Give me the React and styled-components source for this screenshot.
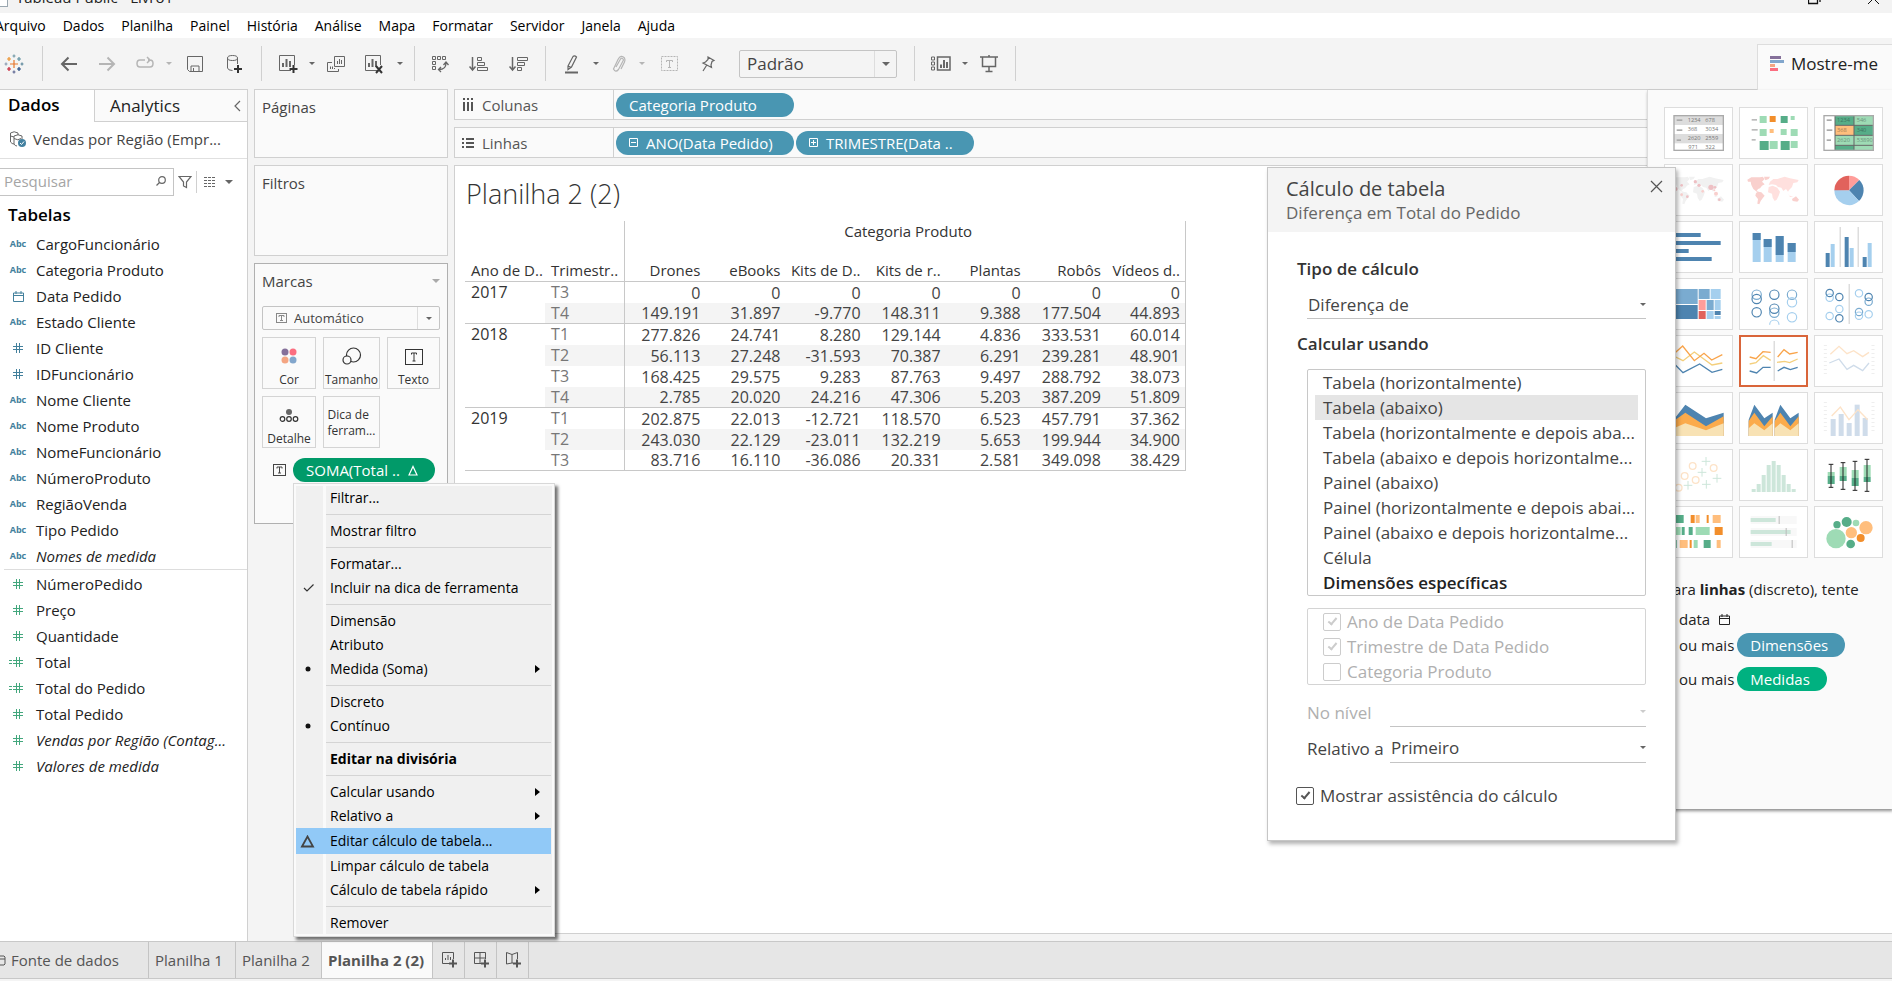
import React from "react";
import styled, { createGlobalStyle, css } from "styled-components";

const UI = `"Open Sans", "Noto Sans", sans-serif`;
const LINE = "#d0d0d0";
const DIM = "#4996b2";
const DK = "#56ad88";
const LT = "#9edbb5";
const OR = "#f28e2b";
const LO = "#ffbe7d";
const B1 = "#4e84b0";
const B2 = "#7aabd0";
const B3 = "#a5cfee";
const FADE_G = "#cde6da";
const FADE_O = "#fde3c8";
const FADE_B = "#cfdcea";

const Global = createGlobalStyle`
  *, *::before, *::after { box-sizing: border-box; }
  body { margin: 0; background: #f4f4f4; font-family: ${UI}; font-size: 15px; line-height: 20px; color: #222; }
  button, input, select { font: inherit; color: inherit; margin: 0; padding: 0; }
  button { background: none; border: 0; text-align: left; white-space: nowrap; }
  select { appearance: none; background: none; border: 0; border-radius: 0; outline: 0; opacity: 1; }
  h1, h2, h3, p, ul { margin: 0; padding: 0; font-weight: 400; }
  ul { list-style: none; }
  svg { display: block; flex: none; }
`;

const Window = styled.div`
  position: relative;
  display: flex;
  flex-direction: column;
  height: 100vh;
  overflow: hidden;
`;

const TitleBar = styled.header`
  display: flex;
  flex: none;
  height: 13px;
  overflow: hidden;
  background: #f3f3f3;
`;
const TitleText = styled.div`
  flex: 1;
  margin: -13px 0 0 8px;
  color: #222;
`;
const WindowButtons = styled.div`
  display: flex;
  gap: 46px;
  margin: -7px 12px 0 0;
`;
const AppMark = styled.div`
  width: 8px;
  height: 7px;
  border: 1px solid #9aa7b0;
  border-width: 0 1px 1px 0;
  background: #fff;
`;

const MenuBar = styled.nav`
  display: flex;
  flex: none;
  gap: 17px;
  height: 25px;
  margin-left: -5px;
  align-items: center;
  background: #fff;
  font-size: 14px;
  color: #000;
`;

const ToolBar = styled.div`
  display: flex;
  flex: none;
  align-items: center;
  height: 51px;
  color: #666;
`;
const Tool = styled.button`
  display: flex;
  flex: none;
  align-items: center;
  justify-content: center;
  width: ${(p) => p.$w || 36}px;
  height: 32px;
  color: ${(p) => (p.$off ? "#b5b5b5" : "#666")};
`;
const ToolSep = styled.span`
  flex: none;
  width: 1px;
  height: 35px;
  margin: 0 8px;
  background: ${LINE};
`;
const Caret = styled.span`
  flex: none;
  width: 0;
  height: 0;
  border: solid transparent;
  border-width: ${(p) => p.$s || 4}px ${(p) => p.$s || 4}px 0;
  border-top-color: ${(p) => p.$c || "#666"};
`;

const SelectBox = styled.label`
  display: flex;
  flex: none;
  align-items: center;
  width: ${(p) => (p.$w ? `${p.$w}px` : "auto")};
  height: ${(p) => p.$h}px;
  border: 1px solid #c4c4c4;
  border-radius: 2px;
  margin-left: ${(p) => p.$ml || 0}px;
  color: #444;
  font-size: ${(p) => p.$fs}px;
  select { flex: 1; min-width: 0; padding-left: 7px; height: 100%; }
`;
const SelectArrow = styled.span`
  display: flex;
  align-items: center;
  justify-content: center;
  width: 22px;
  height: 100%;
  border-left: 1px solid #ddd;
`;
const SelectGlyph = styled.span`
  margin-left: 13px;
  color: #888;
`;

const Body = styled.main`
  display: grid;
  flex: 1;
  min-height: 0;
  grid-template-columns: 248px 194px minmax(0, 1fr);
  column-gap: 6px;
`;

/* Data pane */
const DataPane = styled.aside`
  border-right: 1px solid ${LINE};
  border-top: 1px solid ${LINE};
  background: #fff;
`;
const PaneTabs = styled.div`
  display: flex;
  height: 32px;
  font-size: 17px;
`;
const PaneTab = styled.button`
  display: flex;
  align-items: center;
  justify-content: space-between;
  color: #000;
  ${(p) =>
    p.$active
      ? css`
          width: 94px;
          padding: 0 0 2px 8px;
          font-weight: 600;
        `
      : css`
          flex: 1;
          padding: 0 6px 0 15px;
          border-left: 1px solid ${LINE};
          border-bottom: 1px solid ${LINE};
          background: #fafafa;
          color: #222;
        `}
`;
const Source = styled.div`
  display: flex;
  align-items: center;
  gap: 6px;
  height: 37px;
  padding: 0 0 2px 9px;
  border-bottom: 1px solid #e0e0e0;
  color: #444;
`;
const SearchRow = styled.div`
  display: flex;
  align-items: center;
  height: 27px;
  margin: 9px 0 6px;
  color: #666;
`;
const SearchBox = styled.label`
  display: flex;
  align-items: center;
  width: 174px;
  height: 28px;
  padding: 0 7px 1px 0;
  border: 1px solid #c4c4c4;
  border-left: 0;
  input { flex: 1; min-width: 0; border: 0; padding-left: 4px; background: none; outline: 0; }
  input::placeholder { color: #a5a5a5; opacity: 1; }
`;
const SearchTool = styled.button`
  display: flex;
  align-items: center;
  justify-content: center;
  width: ${(p) => p.$w}px;
  height: 22px;
  border-left: ${(p) => (p.$line ? `1px solid ${LINE}` : "0")};
`;
const TablesHeading = styled.h2`
  height: 30px;
  padding: 4px 0 0 8px;
  font-size: 17px;
  font-weight: 600;
  color: #000;
`;
const Fields = styled.ul`
  ${(p) =>
    p.$second &&
    css`
      border-top: 1px solid #ddd;
      margin-left: 4px;
      padding-top: 1px;
      li { padding-left: 5px; }
    `}
`;
const Field = styled.li`
  display: flex;
  align-items: center;
  gap: 9px;
  height: 26px;
  padding-left: 9px;
  white-space: nowrap;
  color: #222;
  font-style: ${(p) => (p.$italic ? "italic" : "normal")};
`;
const FieldIcon = styled.span`
  display: flex;
  justify-content: center;
  width: 18px;
  color: ${(p) => (p.$green ? "#43a77d" : "#43809c")};
  font-size: 9px;
  font-weight: 700;
  font-style: normal;
`;

/* Cards column */
const Cards = styled.section`
  display: flex;
  flex-direction: column;
  gap: 7px;
`;
const Card = styled.div`
  height: ${(p) => p.$h}px;
  padding: 7px 7px 0;
  border: 1px solid ${(p) => (p.$strong ? "#b0b0b0" : LINE)};
  background: #fafafa;
  color: #444;
`;
const CardHead = styled.div`
  display: flex;
  align-items: center;
  justify-content: space-between;
  height: 20px;
`;
const MarksType = styled.div`
  margin: 15px 0 7px;
`;
const MarkGrid = styled.div`
  display: grid;
  grid-template-columns: 54px 57px 53px;
  gap: 7px;
`;
const MarkButton = styled.button`
  display: flex;
  flex-direction: column;
  align-items: center;
  justify-content: ${(p) => (p.$text ? "center" : "flex-end")};
  gap: 7px;
  height: 52px;
  padding: ${(p) => (p.$text ? "2px 3px 0" : "0")};
  border: 1px solid #d4d4d4;
  font-size: 12px;
  line-height: 16px;
  color: #333;
  white-space: ${(p) => (p.$text ? "normal" : "nowrap")};
`;
const EncodingRow = styled.div`
  position: relative;
  display: flex;
  align-items: center;
  gap: 7px;
  margin-top: 10px;
  padding-left: 11px;
`;
const Pill = styled.button`
  display: flex;
  flex: none;
  align-items: center;
  gap: 8px;
  width: ${(p) => p.$w || 178}px;
  height: 24px;
  padding-left: 13px;
  border-radius: 12px;
  background: ${(p) => p.$bg || DIM};
  color: #fff;
`;

/* Context menu */
const Menu = styled.div`
  position: absolute;
  z-index: 5;
  top: 25px;
  left: 31px;
  width: 262px;
  padding: 2px 3px 1px 2px;
  border: 1px solid #d8d8d8;
  background: linear-gradient(90deg, #f0f0f0 29px, #fafafa 29px, #fafafa 32px, #f0f0f0 32px);
  box-shadow: inset 0 0 0 2px #fafafa, 3px 3px 3px rgba(0, 0, 0, 0.55);
  font-size: 14px;
`;
const MenuItem = styled.button`
  display: grid;
  grid-template-columns: 19px 1fr 6px;
  column-gap: 8px;
  align-items: center;
  width: 100%;
  height: ${(p) => (p.$hot ? 26 : 24)}px;
  padding: 0 11px 0 0;
  background: ${(p) => (p.$hot ? "#91c9f7" : "none")};
  color: #000;
  font-weight: ${(p) => (p.$bold ? 700 : 400)};
  svg { justify-self: end; }
  span { padding-left: 7px; }
`;
const MenuLine = styled.div`
  height: 1px;
  margin: 4px 0 4px 30px;
  background: #d4d4d4;
`;

/* Worksheet */
const Work = styled.section`
  display: flex;
  flex-direction: column;
  gap: 7px;
  padding-bottom: 7px;
`;
const Shelf = styled.div`
  display: flex;
  flex: none;
  height: 31px;
  border: 1px solid ${LINE};
  border-right: 0;
  background: #fafafa;
`;
const ShelfName = styled.div`
  display: flex;
  align-items: center;
  gap: 8px;
  width: 159px;
  padding-left: 7px;
  border-right: 1px solid ${LINE};
  color: #555;
`;
const ShelfPills = styled.div`
  display: flex;
  align-items: center;
  gap: 2px;
  padding-left: 2px;
`;
const Sheet = styled.div`
  flex: 1;
  min-height: 0;
  padding: 14px 10px;
  border: 1px solid ${LINE};
  border-right: 0;
  background: #fff;
`;
const SheetTitle = styled.h1`
  height: 41px;
  padding-left: 1px;
  font-size: 27px;
  line-height: 28px;
  font-weight: 300;
  color: #333;
`;
const Grid = styled.table`
  table-layout: fixed;
  width: 721px;
  border-collapse: separate;
  border-spacing: 0;
  color: #444;
  th, td { height: 21px; padding: 0; white-space: nowrap; }
  th { font-weight: 400; text-align: left; padding-left: 6px; vertical-align: top; color: #333; }
  td, tbody th { font-size: 16px; }
  td { text-align: right; padding-right: 5px; }
  tbody tr:last-child > *, tbody th[rowspan], thead tr:last-child > th { border-bottom: 1px solid #c8c8c8; }
  tr > *:last-child { border-right: 1px solid #c8c8c8; }
  thead tr:first-child > *:first-child { border-right: 1px solid #c8c8c8; }
`;
const TopHead = styled.th`
  height: 23px !important;
  text-align: center !important;
`;
const ColHead = styled.th`
  height: 38px !important;
  vertical-align: bottom !important;
  padding-bottom: 1px !important;
  ${(p) => p.$num && css`text-align: right !important; padding: 0 5px 1px 0 !important;`}
  ${(p) => p.$edge && css`border-right: 1px solid #c8c8c8;`}
`;
const Quarter = styled.th`
  color: #777 !important;
  border-right: 1px solid #c8c8c8;
`;
const Row = styled.tr`
  td, ${Quarter} { background: ${(p) => (p.$band ? "#f4f4f4" : "#fff")}; }
`;

/* Show Me */
const ShowMe = styled.aside`
  position: absolute;
  z-index: 3;
  top: 44px;
  right: 0;
  width: 245px;
`;
const ShowTab = styled.h2`
  display: flex;
  align-items: center;
  gap: 7px;
  height: 46px;
  margin-left: 110px;
  padding: 0 0 7px 12px;
  border: 1px solid #ddd;
  border-width: 1px 0 0 1px;
  background: #fafafa;
  font-size: 17px;
`;
const ShowBody = styled.div`
  height: 719px;
  padding: 17px 9px 0 16px;
  border-left: 1px solid #ddd;
  background: #fafafa;
  box-shadow: 1px 2px 3px rgba(0, 0, 0, 0.45);
`;
const Thumbs = styled.div`
  display: grid;
  grid-template-columns: repeat(3, 69px);
  gap: 5px 6px;
`;
const Thumb = styled.button`
  height: 52px;
  border: 1px solid #ddd;
  background: #fff;
  outline: ${(p) => (p.$on ? "2px solid #d9653a" : "0")};
  outline-offset: -2px;
`;
const Hint = styled.p`
  display: flex;
  align-items: center;
  gap: ${(p) => p.$gap || 3}px;
  height: ${(p) => p.$h}px;
  padding-left: 15px;
  white-space: nowrap;
`;
const HintLead = styled.p`
  padding: 21px 0 6px;
  white-space: nowrap;
`;

/* Table calculation dialog */
const Dialog = styled.section`
  position: absolute;
  z-index: 4;
  top: 167px;
  right: 216px;
  width: 409px;
  height: 674px;
  border: 1px solid #c6c6c6;
  background: #fff;
  box-shadow: 2px 3px 4px rgba(0, 0, 0, 0.3);
  font-size: 17px;
  line-height: 25px;
  color: #444;
`;
const DialogHead = styled.header`
  position: relative;
  height: 64px;
  padding: 9px 18px 0;
  background: #f4f4f4;
  h2 { font-size: 20px; line-height: 24px; }
  p { font-size: 17px; line-height: 24px; color: #666; }
`;
const Close = styled.button`
  position: absolute;
  top: 12px;
  right: 12px;
  color: #555;
`;
const DialogBody = styled.div`
  padding: 24px 29px 0 29px;
`;
const Label = styled.h3`
  margin-top: ${(p) => p.$mt || 0}px;
  font-size: 17px;
  font-weight: 600;
  color: #333;
`;
const Line = styled.label`
  display: flex;
  align-items: center;
  width: ${(p) => (p.$full ? "auto" : "256px")};
  height: ${(p) => p.$h}px;
  margin: ${(p) => (p.$full ? "10px 0 0 10px" : 0)};
  border-bottom: 1px solid #c4c4c4;
  select { flex: 1; min-width: 0; padding-left: 1px; }
`;
const ListBox = styled.div`
  margin: 13px 0 12px 10px;
  padding: 0 7px;
  border: 1px solid #c8c8c8;
  border-radius: 2px;
`;
const Option = styled.button`
  display: block;
  width: 100%;
  height: 25px;
  padding: 0 8px;
  background: ${(p) => (p.$on ? "#e5e5e5" : "none")};
  font-weight: ${(p) => (p.$bold ? 600 : 400)};
  color: ${(p) => (p.$bold ? "#222" : "#444")};
`;
const CheckBoxes = styled.div`
  margin: 0 0 9px 10px;
  padding: 0 15px;
  border: 1px solid #d4d4d4;
  border-radius: 2px;
`;
const Check = styled.label`
  display: flex;
  align-items: center;
  gap: 6px;
  height: 25px;
  color: ${(p) => (p.$off ? "#b0b0b0" : "#444")};
  input {
    appearance: none;
    flex: none;
    width: 18px;
    height: 18px;
    border: 1px solid ${(p) => (p.$off ? "#ccc" : "#555")};
    border-radius: 2px;
    display: grid;
    place-items: center;
  }
  input:checked::before {
    content: "";
    width: 5px;
    height: 9px;
    margin-bottom: 3px;
    border: solid ${(p) => (p.$off ? "#ccc" : "#555")};
    border-width: 0 2px 2px 0;
    rotate: 40deg;
  }
`;
const FormRow = styled.div`
  display: flex;
  align-items: center;
  justify-content: space-between;
  height: 36px;
  margin-left: 10px;
  color: ${(p) => (p.$off ? "#b0b0b0" : "#444")};
`;
const Final = styled.div`
  margin: 17px 0 0 -1px;
`;

/* Sheet tabs */
const TabBar = styled.footer`
  display: flex;
  flex: none;
  height: 38px;
  margin-bottom: 2px;
  border: 1px solid #c8c8c8;
  border-width: 1px 0;
  background: #e6e6e6;
  color: #555;
`;
const SheetTab = styled.button`
  display: flex;
  align-items: center;
  gap: 5px;
  flex: none;
  width: ${(p) => p.$w}px;
  padding-left: ${(p) => (p.$icon ? 9 : p.$first ? 0 : 6)}px;
  border-right: 1px solid #c4c4c4;
  background: ${(p) => (p.$on ? "#fafafa" : "none")};
  font-weight: ${(p) => (p.$on ? 700 : 400)};
  color: #555;
`;

const Icon = ({ w = 20, h = 20, sw = 1, children, ...rest }) => (
  <svg width={w} height={h} viewBox={`0 0 ${w} ${h}`} fill="none" stroke="currentColor" strokeWidth={sw} aria-hidden="true" {...rest}>
    {children}
  </svg>
);

const Cross = ({ x, y, s, c }) => <path d={`M${x - s} ${y}H${x + s}M${x} ${y - s}V${y + s}`} stroke={c} />;

const Logo = () => (
  <Icon w={20} h={20} sw={1.2}>
    <Cross x={10} y={10} s={4} c="#e8762c" />
    <Cross x={10} y={2} s={1.5} c="#7199a6" />
    <Cross x={10} y={18} s={1.5} c="#5b6591" />
    <Cross x={2} y={10} s={1.5} c="#8a9ab0" />
    <Cross x={18} y={10} s={1.5} c="#5b879b" />
    <Cross x={5} y={5} s={2} c="#eb912c" />
    <Cross x={15} y={5} s={2} c="#5c8fa0" />
    <Cross x={5} y={15} s={2} c="#c72035" />
    <Cross x={15} y={15} s={2} c="#1f447e" />
  </Icon>
);
const Plus = ({ x, y }) => <path d={`M${x - 4} ${y}H${x + 4}M${x} ${y - 4}V${y + 4}`} stroke="#333" strokeWidth="2" />;
const ChartBox = ({ children }) => (
  <Icon w={20} h={20}>
    <path d="M13 16.5H1.5V1.5H16.5V11" />
    <path d="M5 13V9M8.500 13V5M12 13V7" strokeWidth="2" />
    {children}
  </Icon>
);
const CalendarIcon = ({ s = 11 }) => (
  <svg width={s} height={s} viewBox="0 0 11 11" fill="none" stroke="currentColor" aria-hidden="true">
    <path d="M.5 2H10.500V10.500H.5ZM.5 4.500H10.500M3 0V3M8 0V3" />
  </svg>
);
const HashIcon = ({ calc }) => (
  <Icon w={18} h={12}>
    <path d="M4 4.500H14M4 7.500H14M7.500 1V11M10.500 1V11" />
    {calc && <path d="M0 4.500H3M0 7.500H3" />}
  </Icon>
);
const TextBoxIcon = ({ w = 13, h = 12 }) => (
  <Icon w={w} h={h}>
    <rect x=".5" y=".5" width={w - 1} height={h - 1} />
    <path d={`M${w / 2 - 2.5} ${h / 4 + 1.5}V${h / 4}H${w / 2 + 2.5}V${h / 4 + 1.5}M${w / 2} ${h / 4}V${h * 0.75}M${w / 2 - 1.5} ${h * 0.75}H${w / 2 + 1.5}`} />
  </Icon>
);

const fieldIcon = {
  abc: "Abc",
  date: <CalendarIcon />,
  num: <HashIcon />,
  calc: <HashIcon calc />,
};

const dimensions = [
  ["abc", "CargoFuncionário"],
  ["abc", "Categoria Produto"],
  ["date", "Data Pedido"],
  ["abc", "Estado Cliente"],
  ["num", "ID Cliente"],
  ["num", "IDFuncionário"],
  ["abc", "Nome Cliente"],
  ["abc", "Nome Produto"],
  ["abc", "NomeFuncionário"],
  ["abc", "NúmeroProduto"],
  ["abc", "RegiãoVenda"],
  ["abc", "Tipo Pedido"],
  ["abc", "Nomes de medida", true],
];
const measures = [
  ["num", "NúmeroPedido"],
  ["num", "Preço"],
  ["num", "Quantidade"],
  ["calc", "Total"],
  ["calc", "Total do Pedido"],
  ["num", "Total Pedido"],
  ["num", "Vendas por Região (Contag...", true],
  ["num", "Valores de medida", true],
];

const columns = ["Drones", "eBooks", "Kits de D..", "Kits de r..", "Plantas", "Robôs", "Vídeos d.."];
const years = [
  ["2017", [
    ["T3", "0", "0", "0", "0", "0", "0", "0"],
    ["T4", "149.191", "31.897", "-9.770", "148.311", "9.388", "177.504", "44.893"],
  ]],
  ["2018", [
    ["T1", "277.826", "24.741", "8.280", "129.144", "4.836", "333.531", "60.014"],
    ["T2", "56.113", "27.248", "-31.593", "70.387", "6.291", "239.281", "48.901"],
    ["T3", "168.425", "29.575", "9.283", "87.763", "9.497", "288.792", "38.073"],
    ["T4", "2.785", "20.020", "24.216", "47.306", "5.203", "387.209", "51.809"],
  ]],
  ["2019", [
    ["T1", "202.875", "22.013", "-12.721", "118.570", "6.523", "457.791", "37.362"],
    ["T2", "243.030", "22.129", "-23.011", "132.219", "5.653", "199.944", "34.900"],
    ["T3", "83.716", "16.110", "-36.086", "20.331", "2.581", "349.098", "38.429"],
  ]],
];

const menuItems = [
  { t: "Filtrar..." }, null,
  { t: "Mostrar filtro" }, null,
  { t: "Formatar..." }, { t: "Incluir na dica de ferramenta", mark: "check" }, null,
  { t: "Dimensão" }, { t: "Atributo" }, { t: "Medida (Soma)", mark: "dot", sub: true }, null,
  { t: "Discreto" }, { t: "Contínuo", mark: "dot" }, null,
  { t: "Editar na divisória", bold: true }, null,
  { t: "Calcular usando", sub: true }, { t: "Relativo a", sub: true },
  { t: "Editar cálculo de tabela...", mark: "delta", hot: true },
  { t: "Limpar cálculo de tabela" }, { t: "Cálculo de tabela rápido", sub: true }, null,
  { t: "Remover" },
];
const markIcon = {
  check: <Icon w={12} h={10}><path d="M1 5L4 8L10.500 1.500" strokeWidth="1.200" stroke="#333" /></Icon>,
  dot: <Icon w={10} h={6} stroke="none"><circle cx="3" cy="3" r="2.500" fill="#111" /></Icon>,
  delta: <Icon w={15} h={13}><path d="M2 11.500L7.500 1.500L13 11.500Z" stroke="#444" strokeWidth="1.800" /></Icon>,
};

const R = ({ d, f }) => <rect x={d[0]} y={d[1]} width={d[2]} height={d[3] ?? d[2]} fill={f} />;
const Rects = ({ list }) => list.map(([f, ...d], i) => <R key={i} d={d} f={f} />);
const Poly = ({ p, c, w = 4 }) => <polyline points={p} fill="none" stroke={c} strokeWidth={w} />;
const Rings = ({ list, r }) => list.map(([x, y, c], i) => <circle key={i} cx={x} cy={y} r={r} fill="none" stroke={c} strokeWidth="3.500" />);
const Mini = ({ x, y, c = "#777", children }) => <text x={x} y={y} fontSize="17" fill={c}>{children}</text>;
const Ticks = () => <path d="M31 27V123M174 27V123" stroke="#eee" strokeWidth="9" strokeDasharray="3 9" />;
const Continents = ({ a, b }) => (
  <g>
    <path fill={a} d="M22 44L34 37L60 37L68 35L74 42L66 50L74 58L66 62L60 70L54 72L50 78L58 82L52 82L40 72L34 60L32 50L24 50ZM72 35L90 35L86 42L76 46Z" />
    <path fill={a} d="M54 80L64 82L74 92L68 100L62 108L58 118L52 116L54 102L46 92L48 84Z" />
    <path fill={b} d="M86 66L98 62L112 68L120 80L116 92L110 104L104 108L98 98L96 86L84 82Z" />
    <path fill={b} d="M86 60L90 50L100 42L112 42L134 35L150 40L176 45L172 52L160 54L156 66L148 74L144 80L138 72L130 78L124 68L114 66L108 60L96 58Z" />
    <path fill={b} d="M142 84L148 92L160 94L150 96Z" />
    <path fill={a} d="M156 102L168 94L177 104L172 110L158 108Z" />
  </g>
);
const areaBand = (x, k) => {
  const px = (v) => x + Math.round(v * k);
  const pts = (a) => `${px(0)},${a[0]} ${px(35)},${a[1]} ${px(97)},${a[2]} ${px(150)},${a[3]} ${px(150)},129 ${px(0)},129`;
  return (
    <g>
      <polygon points={pts([80, 35, 76, 59])} fill={B1} />
      <polygon points={pts([84, 59, 100, 70])} fill="#fbab4c" />
      <polygon points={pts([106, 91, 112, 91])} fill="#f8e2b4" />
    </g>
  );
};

const thumbs = [
  ["Tabela de texto", <g key="g">
    <rect x="26" y="22" width="150" height="106" fill="#fff" />
    <Rects list={[["#ddd", 26, 22, 150, 29], ["#ddd", 26, 78, 150, 28], ["#aaa", 35, 34, 17, 5], ["#aaa", 35, 64, 17, 5], ["#aaa", 35, 94, 13, 5]]} />
    <Mini x={68} y={43}>1234</Mini><Mini x={121} y={43}>678</Mini>
    <Mini x={68} y={70}>368</Mini><Mini x={121} y={70}>3034</Mini>
    <Mini x={68} y={97}>2620</Mini><Mini x={121} y={97}>2559</Mini>
    <Mini x={70} y={122}>971</Mini><Mini x={121} y={122}>322</Mini>
    <rect x="27" y="23" width="148" height="104" fill="none" stroke="#aaa" strokeWidth="4" />
  </g>],
  ["Mapa de calor", <Rects key="g" list={[
    ["#bbb", 35, 33, 16, 5], ["#bbb", 35, 63, 18, 5], ["#bbb", 35, 93, 12, 5],
    [LT, 59, 24, 21], [OR, 89, 24, 18], [DK, 122, 24, 21], [LT, 152, 24, 12],
    [LT, 59, 63, 21], [LO, 89, 63, 12], [LT, 122, 63, 18], [LT, 152, 63, 21],
    [DK, 59, 99, 27], [LT, 89, 99, 24], [DK, 122, 99, 27], [LT, 152, 99, 21],
  ]} />],
  ["Tabela de realce", <g key="g">
    <Rects list={[
      [DK, 60, 22, 57, 30], [LT, 117, 22, 59, 30], [LO, 60, 52, 57, 30], [DK, 117, 52, 59, 30],
      [LT, 60, 82, 57, 30], [LT, 117, 82, 59, 30], [DK, 60, 112, 57, 16], [LT, 117, 112, 59, 16],
      ["#aaa", 35, 34, 15, 5], ["#aaa", 35, 64, 17, 5], ["#aaa", 35, 94, 13, 5],
    ]} />
    <path d="M60 22V128M117 22V128M60 52H176M60 82H176M60 112H176" stroke="#666" strokeWidth="3" />
    <Mini x={66} y={42} c="#3f7560">1234</Mini><Mini x={125} y={42} c="#6b927a">546</Mini>
    <Mini x={66} y={72} c="#a07a50">368</Mini><Mini x={125} y={72} c="#3f7560">340</Mini>
    <Mini x={66} y={102} c="#6b927a">2620</Mini><Mini x={125} y={102} c="#6b927a">53890</Mini>
    <rect x="27" y="23" width="148" height="104" fill="none" stroke="#aaa" strokeWidth="4" />
  </g>],
  ["Mapa de símbolos", <g key="g">
    <Continents a="#f1f1f1" b="#f1f1f1" />
    {[[91, 50, 5], [102, 61, 5], [113, 79, 4], [138, 67, 8], [150, 67, 4], [153, 86, 6], [163, 104, 4], [50, 61, 4], [50, 89, 4], [67, 95, 4], [32, 72, 6], [148, 76, 3]].map(([x, y, r], i) => (
      <circle key={i} cx={x} cy={y} r={r} fill={i % 3 === 2 ? "#f9cfcd" : "#eec0c4"} />
    ))}
  </g>],
  ["Mapa", <Continents key="g" a="#f9d0cd" b="#ffe0de" />],
  ["Gráfico de pizza", <g key="g">
    <path d="M102 76V32A44 44 0 0 1 133 45Z" fill="#ff9d9a" />
    <path d="M102 76L133 45A44 44 0 0 1 132 108Z" fill={B1} />
    <path d="M102 76L132 108A44 44 0 0 1 58 75Z" fill={B3} />
    <path d="M102 76H58A44 44 0 0 1 102 32Z" fill="#e1625c" />
  </g>],
  ["Barras horizontais", <Rects key="g" list={[[B1, 26, 33, 81, 12], [B1, 26, 57, 141, 12], [B1, 26, 81, 45, 12], [B1, 26, 105, 114, 12]]} />],
  ["Barras empilhadas", <Rects key="g" list={[
    [B3, 38, 33, 24, 87], [B1, 38, 33, 24, 21], [B3, 71, 51, 24, 69], [B1, 71, 51, 24, 24],
    [B3, 107, 42, 24, 78], [B1, 107, 42, 24, 57], [B3, 143, 63, 24, 57], [B1, 143, 63, 24, 27],
  ]} />],
  ["Barras lado a lado", <Rects key="g" list={[
    [B1, 32, 93, 12, 42], [B3, 47, 66, 12, 69], ["#ccc", 74, 15, 3, 120], [B1, 89, 45, 12, 90], [B3, 104, 78, 12, 57],
    ["#ccc", 128, 15, 3, 120], [B1, 143, 105, 12, 30], [B3, 158, 63, 12, 72],
  ]} />],
  ["Mapa de árvore", <Rects key="g" list={[
    [B2, 26, 30, 72, 45], [B1, 26, 78, 72, 42], [B2, 101, 30, 33, 30], [B3, 137, 30, 30, 30], ["#ff9d9a", 101, 63, 21, 30],
    [B2, 125, 63, 21, 30], [B3, 149, 63, 18, 30], ["#e1625c", 101, 96, 21, 24], [B3, 125, 96, 21, 24], [B1, 149, 96, 18, 12], [B3, 149, 111, 18, 9],
  ]} />],
  ["Exibições em círculo", <g key="g">
    <Rings r={14} list={[[50, 47, B2], [50, 60, B1], [50, 100, B1], [103, 47, B1], [103, 101, B2], [103, 89, B1], [156, 47, B2], [156, 70, B3], [156, 115, B3]]} />
    <path d="M89 137A14 14 0 0 1 117 137" fill="none" stroke={B3} strokeWidth="3.500" />
  </g>],
  ["Círculos lado a lado", <g key="g">
    <Rings r={11} list={[[44, 56, B3], [44, 42, B1], [73, 54, B1], [73, 90, B3], [44, 111, B3], [73, 118, B1], [132, 43, B3], [161, 68, B2], [161, 54, B1], [132, 99, B2], [132, 110, B3], [161, 106, B3]]} />
    <R d={[101, 15, 3, 120]} f="#ccc" />
  </g>],
  ["Linhas contínuas", <g key="g">
    <Poly c="#f4cf7c" p="26,60 54,74 88,48 141,87 172,81" />
    <Poly c="#f9a44a" p="26,54 53,30 88,74 117,52 140,72 172,56" />
    <Poly c={B1} p="26,82 54,110 104,84 141,109 172,100" />
  </g>],
  ["Linhas discretas", <g key="g">
    <Poly c="#f9a44a" p="29,63 48,68 69,47 92,49" /><Poly c="#f4cf7c" p="29,84 48,80 70,59 92,73" /><Poly c={B1} p="29,105 50,111 69,94 92,94" />
    <R d={[101, 15, 3, 120]} f="#ccc" />
    <Poly c="#f9a44a" p="113,63 132,41 149,54 173,49" /><Poly c="#f4cf7c" p="111,79 134,76 149,80 173,69" /><Poly c={B1} p="113,105 132,94 151,101 173,94" />
  </g>],
  ["Linhas duplas", <g key="g"><Ticks /><Poly c={FADE_O} p="46,55 72,31 96,53 116,44 143,62 162,49" /><Poly c={FADE_B} p="43,81 72,69 96,100 116,88 143,104 162,81" /></g>],
  ["Áreas contínuas", areaBand(26, 1)],
  ["Áreas discretas", <g key="g">{areaBand(26, 0.48)}{areaBand(104, 0.48)}</g>],
  ["Combinação dupla", <g key="g">
    <Ticks />
    <Rects list={[[FADE_B, 47, 78, 15, 51], [FADE_B, 71, 63, 15, 66], [FADE_B, 95, 90, 15, 39], [FADE_B, 119, 35, 15, 94], [FADE_B, 143, 75, 15, 54]]} />
    <Poly c={FADE_O} p="50,69 76,42 102,80 129,50 158,80" />
  </g>],
  ["Gráfico de dispersão", <g key="g">
    {[[83, 48], [146, 54], [59, 78], [92, 90], [41, 113]].map(([x, y]) => <circle key={x} cx={x} cy={y} r="10" fill="none" stroke={FADE_O} strokeWidth="4" />)}
    <g strokeWidth="3">{[[123, 34], [111, 67], [156, 85], [69, 106], [124, 103]].map(([x, y]) => <Cross key={x} x={x} y={y} s={13} c={FADE_G} />)}</g>
  </g>],
  ["Histograma", <Rects key="g" list={[117, 102, 75, 45, 33, 45, 75, 102, 117].map((y, i) => [FADE_G, 35 + i * 15, y, 12, 126 - y])} />],
  ["Gráfico de caixa", <g key="g">
    {[[48, 43, 66, 78, 102, 112], [84, 38, 51, 78, 93, 118], [120, 34, 60, 84, 108, 121], [156, 28, 45, 81, 96, 124]].map(([x, a, b, c, d, e]) => (
      <g key={x}>
        <R d={[x - 10, b, 21, c - b]} f={LT} /><R d={[x - 10, c, 21, d - c]} f={DK} />
        <path d={`M${x} ${a}V${e}M${x - 7} ${a}H${x + 7}M${x - 7} ${e}H${x + 7}`} stroke="#222" strokeWidth="3" />
      </g>
    ))}
  </g>],
  ["Gráfico de Gantt", <Rects key="g" list={[
    [DK, 26, 24, 30, 24], [OR, 77, 24, 12, 24], [LO, 92, 24, 12, 24], [OR, 125, 24, 6, 24], [LO, 143, 24, 24, 24],
    [LT, 26, 60, 21, 24], [DK, 50, 60, 9, 24], [DK, 71, 60, 12, 24], [LT, 92, 60, 42, 24], [OR, 149, 60, 24, 24],
    [DK, 26, 99, 9, 24], [LO, 44, 99, 24, 24], [OR, 74, 99, 6, 24], [LT, 86, 99, 12, 24], [DK, 116, 99, 21, 24], [LO, 155, 99, 12, 24],
  ]} />],
  ["Gráfico com marcadores", <Rects key="g" list={[
    ["#f8f8f8", 32, 27, 138, 24], ["#f8f8f8", 32, 63, 138, 24], ["#f8f8f8", 32, 99, 138, 24],
    [FADE_G, 32, 33, 75, 12], [FADE_G, 32, 69, 120, 12], [FADE_G, 32, 105, 63, 12],
    ["#bbb", 116, 27, 3, 24], ["#bbb", 137, 63, 3, 24], ["#bbb", 155, 99, 3, 24],
  ]} />],
  ["Bolhas agrupadas", <g key="g">
    {[[66, 53, 11, DK], [95, 45, 15, DK], [123, 48, 10, LT], [153, 62, 20, LO], [109, 77, 17, LO], [137, 93, 12, OR], [107, 111, 13, DK], [63, 95, 29, LT]].map(([x, y, r, f]) => (
      <circle key={x} cx={x} cy={y} r={r} fill={f} />
    ))}
  </g>],
];

const calcOptions = [
  "Tabela (horizontalmente)", "Tabela (abaixo)", "Tabela (horizontalmente e depois aba...", "Tabela (abaixo e depois horizontalme...",
  "Painel (abaixo)", "Painel (horizontalmente e depois abai...", "Painel (abaixo e depois horizontalme...", "Célula", "Dimensões específicas",
];

function TopTools() {
  return (
    <ToolBar>
      <Tool as="span" $w={27}><Logo /></Tool>
      <Tool as="span" $w={7} />
      <ToolSep />
      <Tool aria-label="Voltar"><Icon w={18} sw={2}><path d="M17 10H2M8.500 3.500L2 10L8.500 16.500" /></Icon></Tool>
      <Tool $w={40} $off aria-label="Avançar"><Icon w={18} sw={2}><path d="M1 10H16M9.500 3.500L16 10L9.500 16.500" /></Icon></Tool>
      <Tool $off aria-label="Repetir"><Icon w={20} h={16} sw={1.5}><path d="M10 4H5Q2 4 2 7.500Q2 11 5 11H15Q18 11 18 7.500Q18 4 15 4H13M12 1L15 4L12 7" /></Icon></Tool>
      <Tool $w={12} $off aria-label="Opções de repetir"><Caret $s={3} $c="#b5b5b5" /></Tool>
      <Tool $w={40} aria-label="Salvar"><Icon w={18} h={18}><path d="M1.500 1.500H16.500V16.500H3.500L1.500 14.500ZM5 16V11H13V16M7.500 13V16" /></Icon></Tool>
      <Tool $w={38} aria-label="Nova fonte de dados">
        <Icon w={18}><ellipse cx="7.500" cy="4" rx="5" ry="2.500" /><path d="M2.500 4V14Q3 16.500 7.500 16.500M12.500 4V10" /><Plus x={13} y={15} /></Icon>
      </Tool>
      <ToolSep />
      <Tool aria-label="Nova planilha"><ChartBox><Plus x={15.5} y={15} /></ChartBox></Tool>
      <Tool $w={12} aria-label="Opções de nova planilha"><Caret $s={3} /></Tool>
      <Tool aria-label="Duplicar"><Icon w={20} h={18}><path d="M8.500 1.500H18.500V11.500H8.500ZM11.500 9V6M13.500 9V4M15.500 9V5M6 7.500H1.500V16.500H12.500V14M4.500 14V11.500M6.500 14V11.500M8.500 14V13" /></Icon></Tool>
      <Tool $w={40} aria-label="Limpar planilha"><ChartBox><path d="M12 12L18 19M18 12L12 19" stroke="#333" strokeWidth="2" /></ChartBox></Tool>
      <Tool $w={12} aria-label="Opções de limpar"><Caret $s={3} /></Tool>
      <ToolSep />
      <Tool $w={34} aria-label="Trocar linhas e colunas">
        <Icon w={18} h={18}><path d="M1.500 1.500H4.500V4.500H1.500ZM6.500 1.500H9.500V4.500H6.500ZM11.500 1.500H14.500V4.500H11.500ZM1.500 6.500H4.500V9.500H1.500ZM1.500 11.500H4.500V14.500H1.500Z" /><path d="M8 14.500Q15 14.500 15 8M12.500 10L15 7L17.500 10M10 12L7.500 14.500L10 17" strokeWidth="1.300" /></Icon>
      </Tool>
      <Tool $w={44} aria-label="Classificar crescente">
        <Icon w={20} h={16}><path d="M3.500 1V13M.5 10.500L3.500 14L6.500 10.500" strokeWidth="1.500" /><path d="M8.500 1.500H12.500V4.500H8.500ZM8.500 6.500H15.500V9.500H8.500ZM8.500 11.500H18.500V14.500H8.500Z" /></Icon>
      </Tool>
      <Tool aria-label="Classificar decrescente">
        <Icon w={20} h={16}><path d="M3.500 1V13M.5 10.500L3.500 14L6.500 10.500" strokeWidth="1.500" /><path d="M8.500 1.500H18.500V4.500H8.500ZM8.500 6.500H15.500V9.500H8.500ZM8.500 11.500H12.500V14.500H8.500Z" /></Icon>
      </Tool>
      <ToolSep />
      <Tool aria-label="Realçar"><Icon w={16} sw={1.2}><path d="M4 12L9 2.500Q10.500 1 12.500 3L7.500 13L4 15.500ZM4 12L7.500 13.500" /><path d="M1 18.500H14" strokeWidth="2" /></Icon></Tool>
      <Tool $w={12} aria-label="Opções de realce"><Caret $s={3} /></Tool>
      <Tool $w={34} $off aria-label="Agrupar"><Icon w={16} h={18} sw={1.2}><path d="M5 12L9.500 4Q11.500 2 12.500 5L7.500 14.500Q4.500 18 2.500 14L7 4.500Q10 -1 13.500 3Q14.500 5 13.500 7L10 14" /></Icon></Tool>
      <Tool $w={12} $off aria-label="Opções de grupo"><Caret $s={3} $c="#b5b5b5" /></Tool>
      <Tool $w={44} $off aria-label="Mostrar rótulos"><Icon w={18} h={16}><rect x=".5" y=".5" width="16" height="14" strokeDasharray="2 1" /><path d="M5.500 6V4.500H11.500V6M8.500 4.500V11.500M7 11.500H10" /></Icon></Tool>
      <Tool $w={32} aria-label="Fixar"><Icon w={16} h={18} sw={1.2}><path d="M8 2L14 5.500L12 6.500L11 10L11.500 12.500L3 8L5.500 7L8 4.500ZM6.500 10.500L3 16" /></Icon></Tool>
      <SelectBox $w={158} $h={28} $fs={17} $ml={15} aria-label="Ajuste">
        <select><option>Padrão</option></select>
        <SelectArrow><Caret /></SelectArrow>
      </SelectBox>
      <Tool as="span" $w={9} />
      <ToolSep />
      <Tool aria-label="Mostrar cartões"><Icon w={20} h={16}><path d="M.5 1H3.500V4H.5ZM.5 6H3.500V9H.5ZM.5 11H3.500V14H.5Z" /><path d="M6.500 1H19V14H6.500Z" strokeWidth="1.500" /><path d="M10 12V8.500M13 12V4M16 12V6" strokeWidth="2" /></Icon></Tool>
      <Tool $w={12} aria-label="Opções de cartões"><Caret $s={3} /></Tool>
      <Tool aria-label="Modo de apresentação"><Icon w={18} h={18} sw={1.5}><path d="M0 2H18M2.500 2V11.500H15.500V2M9 0V2M9 11.500V16M5.500 16.500H12.500" /></Icon></Tool>
      <ToolSep />
    </ToolBar>
  );
}

const FieldList = ({ items, second }) => (
  <Fields $second={second}>
    {items.map(([kind, name, italic]) => (
      <Field key={name} $italic={italic}>
        <FieldIcon $green={second}>{fieldIcon[kind]}</FieldIcon>
        {name}
      </Field>
    ))}
  </Fields>
);

const ContextMenu = () => (
  <Menu role="menu">
    {menuItems.map((m, i) =>
      m ? (
        <MenuItem key={i} role="menuitem" $hot={m.hot} $bold={m.bold}>
          {markIcon[m.mark] || <i />}
          <span>{m.t}</span>
          {m.sub && <Icon w={5} h={8} stroke="none"><path d="M0 0L5 4L0 8Z" fill="#000" /></Icon>}
        </MenuItem>
      ) : (
        <MenuLine key={i} />
      )
    )}
  </Menu>
);

export default function App() {
  return (
    <Window>
      <Global />
      <TitleBar>
        <AppMark />
        <TitleText>Tableau Public - Livro1</TitleText>
        <WindowButtons>
          <Icon w={13} h={12} stroke="#111"><path d="M.5 2.500H9.500V10.500H.5ZM12 1V9" strokeWidth="1.300" /></Icon>
          <Icon w={13} h={12} stroke="#111"><path d="M1 0L12 11M12 0L1 11" /></Icon>
        </WindowButtons>
      </TitleBar>
      <MenuBar>
        {["Arquivo", "Dados", "Planilha", "Painel", "História", "Análise", "Mapa", "Formatar", "Servidor", "Janela", "Ajuda"].map((t) => (
          <button key={t}>{t}</button>
        ))}
      </MenuBar>
      <TopTools />

      <Body>
        <DataPane>
          <PaneTabs>
            <PaneTab $active>Dados</PaneTab>
            <PaneTab>
              Analytics
              <Icon w={7} h={12} sw={1.2} stroke="#666"><path d="M6 1L1 6L6 11" /></Icon>
            </PaneTab>
          </PaneTabs>
          <Source>
            <Icon w={18} h={18} stroke="#666">
              <path d="M1.500 3Q5 .5 9 3V5M1.500 3V12Q3 14 5 14M5 6Q9 3.500 13 6V9M5 6V14Q6 16 8 16M5 8.500Q9 11 12 8.500M1.500 6L5 7" />
              <circle cx="13" cy="13" r="4" fill="#4381a0" stroke="none" />
              <path d="M11 13L12.500 14.500L15 11.500" stroke="#fff" />
            </Icon>
            Vendas por Região (Empr...
          </Source>
          <SearchRow>
            <SearchBox aria-label="Pesquisar">
              <input placeholder="Pesquisar" />
              <Icon w={10} h={10} sw={1.2}><circle cx="6" cy="4" r="3.300" /><path d="M3.500 6.500L.5 9.500" /></Icon>
            </SearchBox>
            <SearchTool $w={22} aria-label="Filtrar campos"><Icon w={14} h={14} sw={1.2}><path d="M1 1.500H13L8.500 7V12.500L5.500 11V7Z" /></Icon></SearchTool>
            <SearchTool $w={26} $line aria-label="Exibir"><Icon w={12} h={10}><path d="M0 .5H12M0 3.500H12M0 6.500H12M0 9.500H12" strokeDasharray="3 1" /></Icon></SearchTool>
            <SearchTool $w={13} aria-label="Mais opções"><Caret /></SearchTool>
          </SearchRow>
          <TablesHeading>Tabelas</TablesHeading>
          <FieldList items={dimensions} />
          <FieldList items={measures} second />
        </DataPane>

        <Cards>
          <Card $h={69}>Páginas</Card>
          <Card $h={91}>Filtros</Card>
          <Card $h={261} $strong>
            <CardHead>Marcas<Caret $c="#aaa" /></CardHead>
            <MarksType>
              <SelectBox $h={24} $fs={13} aria-label="Tipo de marca">
                <SelectGlyph><TextBoxIcon w={11} h={10} /></SelectGlyph>
                <select><option>Automático</option></select>
                <SelectArrow><Caret $s={3} /></SelectArrow>
              </SelectBox>
            </MarksType>
            <MarkGrid>
              <MarkButton>
                <Icon w={18} h={18} stroke="none"><circle cx="5" cy="5" r="3.500" fill="#85709a" /><circle cx="13" cy="5" r="3.500" fill="#fb6e80" /><circle cx="5" cy="13" r="3.500" fill="#f4a582" /><circle cx="13" cy="13" r="3.500" fill="#82a6cc" /></Icon>
                Cor
              </MarkButton>
              <MarkButton>
                <Icon w={20} h={18} sw={1.2}><circle cx="11.500" cy="8" r="7" /><circle cx="5" cy="13" r="4" fill="#fafafa" /></Icon>
                Tamanho
              </MarkButton>
              <MarkButton><TextBoxIcon w={18} h={16} />Texto</MarkButton>
              <MarkButton>
                <Icon w={20} h={16} sw={1.2}><circle cx="10" cy="4" r="3" fill="#666" stroke="none" /><circle cx="3.500" cy="11" r="2.300" /><circle cx="10" cy="11" r="2.300" /><circle cx="16.500" cy="11" r="2.300" /></Icon>
                Detalhe
              </MarkButton>
              <MarkButton $text>Dica de<br />ferram...</MarkButton>
            </MarkGrid>
            <EncodingRow>
              <TextBoxIcon />
              <Pill $w={142} $bg="#019a69">
                SOMA(Total ..
                <Icon w={10} h={11} sw={1.2}><path d="M1 10L5 1.500L9 10Z" /></Icon>
              </Pill>
              <ContextMenu />
            </EncodingRow>
          </Card>
        </Cards>

        <Work>
          <Shelf>
            <ShelfName>
              <Icon w={12} h={14} sw={2}><path d="M2 0V2M6 0V2M10 0V2M2 4V13M6 4V13M10 4V13" /></Icon>
              Colunas
            </ShelfName>
            <ShelfPills><Pill>Categoria Produto</Pill></ShelfPills>
          </Shelf>
          <Shelf>
            <ShelfName>
              <Icon w={12} h={12} sw={2}><path d="M0 2H2M4 2H12M0 6H2M4 6H12M0 10H2M4 10H12" /></Icon>
              Linhas
            </ShelfName>
            <ShelfPills>
              <Pill><Icon w={9} h={9}><path d="M.5.5H8.500V8.500H.5ZM2 4.500H7" /></Icon>ANO(Data Pedido)</Pill>
              <Pill><Icon w={9} h={9}><path d="M.5.5H8.500V8.500H.5ZM2 4.500H7M4.500 2V7" /></Icon>TRIMESTRE(Data ..</Pill>
            </ShelfPills>
          </Shelf>
          <Sheet>
            <SheetTitle>Planilha 2 (2)</SheetTitle>
            <Grid>
              <thead>
                <tr><TopHead colSpan={2} /><TopHead colSpan={7}>Categoria Produto</TopHead></tr>
                <tr>
                  <ColHead>Ano de D..</ColHead>
                  <ColHead $edge>Trimestr..</ColHead>
                  {columns.map((c) => <ColHead $num key={c}>{c}</ColHead>)}
                </tr>
              </thead>
              {years.map(([year, rows]) => (
                <tbody key={year}>
                  {rows.map(([q, ...cells], i) => (
                    <Row key={q} $band={i % 2 === 1}>
                      {i === 0 && <th rowSpan={rows.length}>{year}</th>}
                      <Quarter>{q}</Quarter>
                      {cells.map((v, j) => <td key={j}>{v}</td>)}
                    </Row>
                  ))}
                </tbody>
              ))}
            </Grid>
          </Sheet>
        </Work>
      </Body>

      <TabBar>
        <SheetTab $w={149} $first>
          <Icon w={6} h={14}><path d="M0 3H4L5 4V11L4 12H0M0 6H5" /></Icon>
          Fonte de dados
        </SheetTab>
        <SheetTab $w={87}>Planilha 1</SheetTab>
        <SheetTab $w={86}>Planilha 2</SheetTab>
        <SheetTab $w={111} $on>Planilha 2 (2)</SheetTab>
        <SheetTab $w={32} $icon aria-label="Nova planilha"><Icon w={16} h={16}><path d="M8 11.500H.5V.5H11.500V7M3.500 8V6M6 8V3M8.500 8V5" /><path d="M7 11.500H15M11 7.500V15.500" strokeWidth="2" /></Icon></SheetTab>
        <SheetTab $w={32} $icon aria-label="Novo painel"><Icon w={16} h={16}><path d="M8 11.500H.5V.5H11.500V7M.5 6H11.500M6 .5V11.500" /><path d="M7 11.500H15M11 7.500V15.500" strokeWidth="2" /></Icon></SheetTab>
        <SheetTab $w={32} $icon aria-label="Nova história"><Icon w={16} h={16}><path d="M7 11L6 11L.5 12V.5L6 2.500L11.500 .5V7M6 2.500V11" /><path d="M7 11.500H15M11 7.500V15.500" strokeWidth="2" /></Icon></SheetTab>
      </TabBar>

      <ShowMe>
        <ShowTab>
          <Icon w={14} h={16} stroke="none"><Rects list={[["#85709a", 0, 0, 11, 3], ["#82a6cc", 0, 4, 14, 3], ["#f4a582", 0, 8, 5, 3], ["#fb6e80", 0, 12, 8, 3]]} /></Icon>
          Mostre-me
        </ShowTab>
        <ShowBody>
          <Thumbs>
            {thumbs.map(([name, art]) => (
              <Thumb key={name} aria-label={name} $on={name === "Linhas discretas"}>
                <svg width="67" height="50" viewBox="0 0 201 150" aria-hidden="true">{art}</svg>
              </Thumb>
            ))}
          </Thumbs>
          <HintLead>Para <b>linhas</b> (discreto), tente</HintLead>
          <Hint $h={28} $gap={9}>data <CalendarIcon /></Hint>
          <Hint $h={24}>ou mais <Pill $w={108}>Dimensões</Pill></Hint>
          <Hint $h={44}>ou mais <Pill $w={90} $bg="#00b180">Medidas</Pill></Hint>
        </ShowBody>
      </ShowMe>

      <Dialog role="dialog" aria-label="Cálculo de tabela">
        <DialogHead>
          <h2>Cálculo de tabela</h2>
          <p>Diferença em Total do Pedido</p>
          <Close aria-label="Fechar"><Icon w={13} h={13} sw={1.2}><path d="M1 1L12 12M12 1L1 12" /></Icon></Close>
        </DialogHead>
        <DialogBody>
          <Label>Tipo de cálculo</Label>
          <Line $full $h={28} aria-label="Tipo de cálculo">
            <select><option>Diferença de</option></select>
            <Caret $s={3} />
          </Line>
          <Label $mt={12}>Calcular usando</Label>
          <ListBox role="listbox" aria-label="Calcular usando">
            {calcOptions.map((t, i) => (
              <Option key={t} role="option" aria-selected={i === 1} $on={i === 1} $bold={i === 8}>{t}</Option>
            ))}
          </ListBox>
          <CheckBoxes>
            <Check $off><input type="checkbox" disabled defaultChecked />Ano de Data Pedido</Check>
            <Check $off><input type="checkbox" disabled defaultChecked />Trimestre de Data Pedido</Check>
            <Check $off><input type="checkbox" disabled />Categoria Produto</Check>
          </CheckBoxes>
          <FormRow $off>
            <span>No nível</span>
            <Line $h={30} aria-label="No nível"><select disabled /><Caret $s={3} $c="#ccc" /></Line>
          </FormRow>
          <FormRow>
            <span>Relativo a</span>
            <Line $h={30} aria-label="Relativo a"><select><option>Primeiro</option></select><Caret $s={3} /></Line>
          </FormRow>
          <Final>
            <Check><input type="checkbox" defaultChecked />Mostrar assistência do cálculo</Check>
          </Final>
        </DialogBody>
      </Dialog>
    </Window>
  );
}
